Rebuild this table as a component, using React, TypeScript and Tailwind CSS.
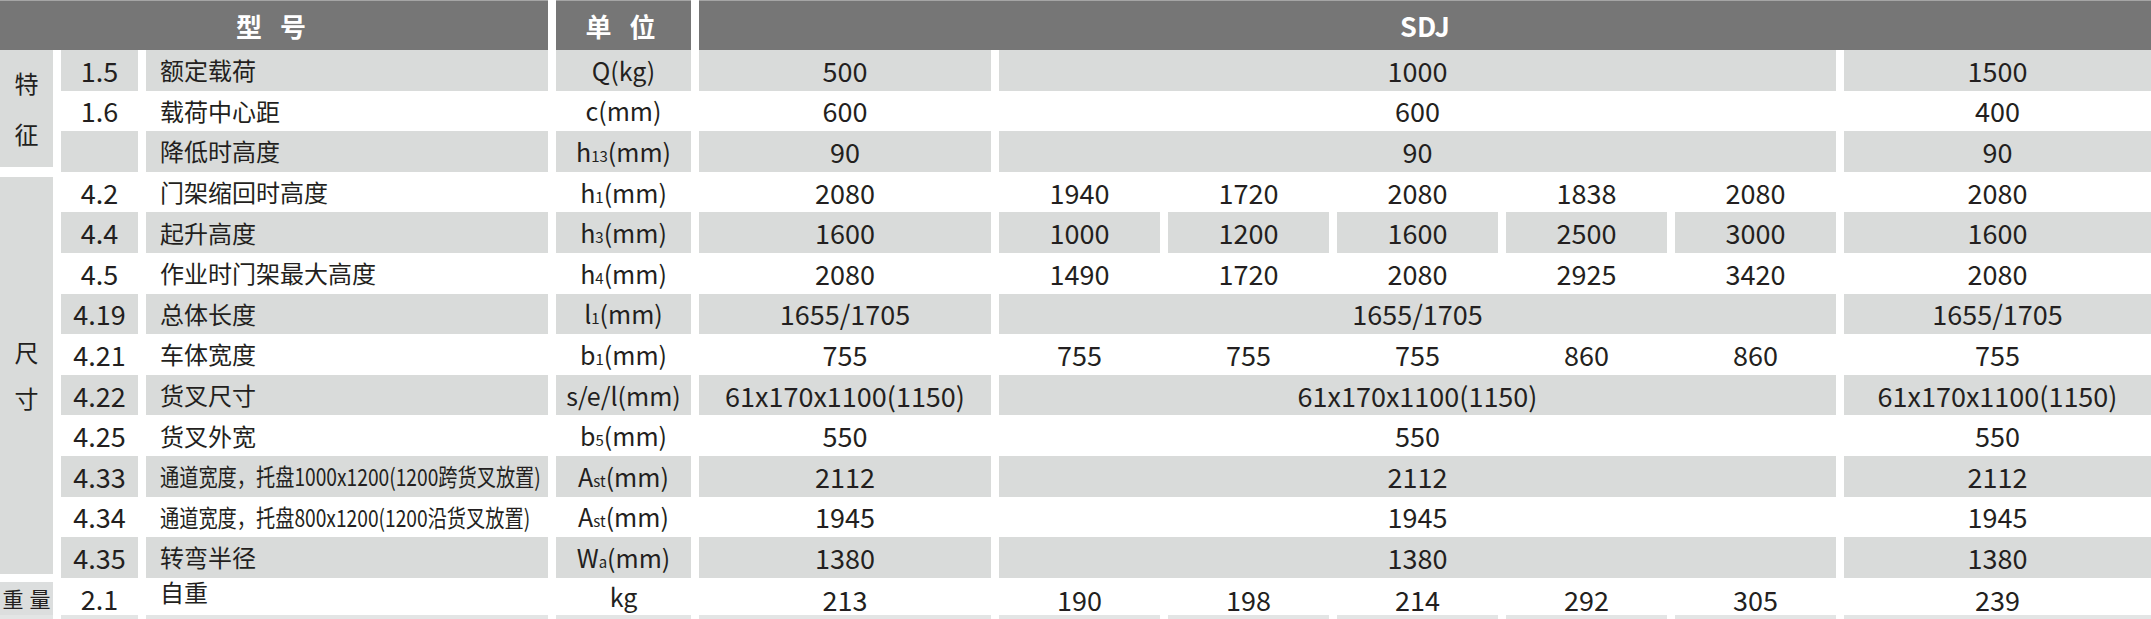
import React from 'react';

type Row = {
  no: string;
  name: React.ReactNode;
  unit: React.ReactNode;
  values: string[];
};

const sub = (base: string, s: string) => (
  <span>
    {base}
    <span className="text-[15px]">{s}</span>
    (mm)
  </span>
);

const narrow = (text: string) => (
  <span className="inline-block origin-left scale-x-[0.8] whitespace-nowrap">{text}</span>
);

const rows: Row[] = [
  { no: '1.5', name: '额定载荷', unit: 'Q(kg)', values: ['500', '1000', '1500'] },
  { no: '1.6', name: '载荷中心距', unit: 'c(mm)', values: ['600', '600', '400'] },
  { no: '', name: '降低时高度', unit: sub('h', '13'), values: ['90', '90', '90'] },
  { no: '4.2', name: '门架缩回时高度', unit: sub('h', '1'), values: ['2080', '1940', '1720', '2080', '1838', '2080', '2080'] },
  { no: '4.4', name: '起升高度', unit: sub('h', '3'), values: ['1600', '1000', '1200', '1600', '2500', '3000', '1600'] },
  { no: '4.5', name: '作业时门架最大高度', unit: sub('h', '4'), values: ['2080', '1490', '1720', '2080', '2925', '3420', '2080'] },
  { no: '4.19', name: '总体长度', unit: sub('l', '1'), values: ['1655/1705', '1655/1705', '1655/1705'] },
  { no: '4.21', name: '车体宽度', unit: sub('b', '1'), values: ['755', '755', '755', '755', '860', '860', '755'] },
  { no: '4.22', name: '货叉尺寸', unit: 's/e/l(mm)', values: ['61x170x1100(1150)', '61x170x1100(1150)', '61x170x1100(1150)'] },
  { no: '4.25', name: '货叉外宽', unit: sub('b', '5'), values: ['550', '550', '550'] },
  { no: '4.33', name: narrow('通道宽度，托盘1000x1200(1200跨货叉放置)'), unit: sub('A', 'st'), values: ['2112', '2112', '2112'] },
  { no: '4.34', name: narrow('通道宽度，托盘800x1200(1200沿货叉放置)'), unit: sub('A', 'st'), values: ['1945', '1945', '1945'] },
  { no: '4.35', name: '转弯半径', unit: sub('W', 'a'), values: ['1380', '1380', '1380'] },
];

function Cell({ gray, className = '', children }: { gray: boolean; className?: string; children?: React.ReactNode }) {
  return (
    <div className={`flex items-center justify-center overflow-hidden ${gray ? 'bg-[#d9dbda]' : 'bg-white'} ${className}`}>
      {children}
    </div>
  );
}

function DataRow({ row, gray }: { row: Row; gray: boolean }) {
  return (
    <>
      <Cell gray={gray} className="col-start-2 text-[27px]">{row.no}</Cell>
      <Cell gray={gray} className="!justify-start pl-[14px] text-[24px]">{row.name}</Cell>
      <Cell gray={gray} className="text-[25px]">{row.unit}</Cell>
      {row.values.length === 3 ? (
        <>
          <Cell gray={gray} className="text-[27px]">{row.values[0]}</Cell>
          <Cell gray={gray} className="col-span-5 text-[27px]">{row.values[1]}</Cell>
          <Cell gray={gray} className="text-[27px]">{row.values[2]}</Cell>
        </>
      ) : (
        row.values.map((v, i) => (
          <Cell key={i} gray={gray} className="text-[27px]">{v}</Cell>
        ))
      )}
    </>
  );
}

export default function App() {
  const last = ['213', '190', '198', '214', '292', '305', '239'];
  return (
    <div className="w-[2151px] h-[619px] bg-white overflow-hidden font-['Noto_Sans_CJK_SC',sans-serif] text-[#231f20] leading-none">
      <div className="grid grid-cols-[53px_77px_402px_135px_292px_161px_161px_161px_161px_161px_1fr] grid-rows-[50px_repeat(13,40.6px)_41px] gap-x-2">
        {/* header */}
        <div className="col-span-3 flex items-center justify-center bg-[#767676] border-t border-[#a5a5a5] text-white font-bold text-[26px] tracking-[6px]">
          型 号
        </div>
        <div className="flex items-center justify-center bg-[#767676] border-t border-[#a5a5a5] text-white font-bold text-[26px] tracking-[6px]">
          单 位
        </div>
        <div className="col-span-7 flex items-center justify-center bg-[#767676] border-t border-[#a5a5a5] text-white font-bold text-[27px]">
          SDJ
        </div>

        {/* group labels */}
        <div className="col-start-1 row-start-2 row-span-3 mb-[5px] flex flex-col items-center justify-center gap-[27px] bg-[#d9dbda] text-[24px]">
          <span>特</span>
          <span>征</span>
        </div>
        <div className="col-start-1 row-start-5 row-span-10 mt-[5px] mb-[4px] flex flex-col items-center justify-center gap-[22px] bg-[#d9dbda] text-[24px]">
          <span>尺</span>
          <span>寸</span>
        </div>

        {rows.map((r, i) => (
          <DataRow key={i} row={r} gray={i % 2 === 0} />
        ))}

        {/* weight row */}
        <div className="col-start-1 mt-[4px] flex items-center justify-center gap-[6px] bg-[#dcdede] border-b-[4px] border-[#e3e5e5] text-[21px]">
          <span>重</span>
          <span>量</span>
        </div>
        <div className="flex items-center justify-center pt-[4px] border-b-[4px] border-[#e3e5e5] text-[27px]">2.1</div>
        <div className="flex items-center justify-start pl-[14px] pb-[8px] border-b-[4px] border-[#e3e5e5] text-[24px]">自重</div>
        <div className="flex items-center justify-center border-b-[4px] border-[#e3e5e5] text-[25px]">kg</div>
        {last.map((v, i) => (
          <div key={i} className="flex items-center justify-center pt-[7px] border-b-[4px] border-[#e3e5e5] text-[27px]">
            {v}
          </div>
        ))}
      </div>
    </div>
  );
}
